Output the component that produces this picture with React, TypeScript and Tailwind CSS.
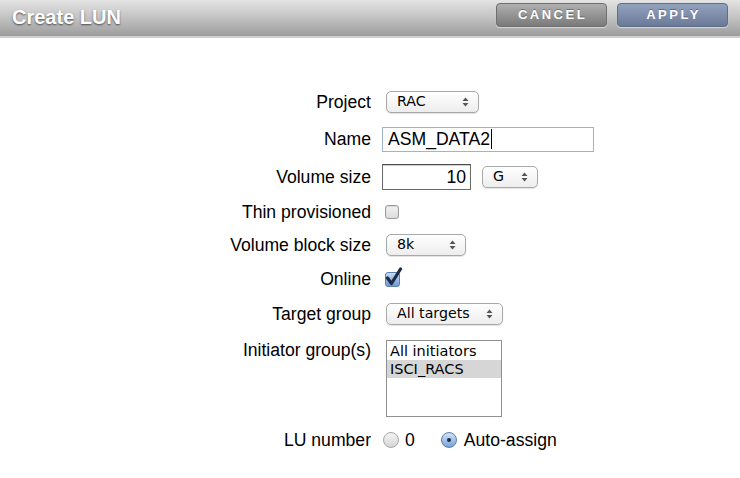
import React from "react";

const ARIAL = { fontFamily: '"Liberation Sans", Arial, sans-serif' };

function Arrows() {
  return (
    <svg width="7" height="10" viewBox="0 0 7 10" className="shrink-0">
      <path d="M3.5 0.5 L6.5 4 L0.5 4 Z" fill="#555" />
      <path d="M3.5 9.5 L6.5 6 L0.5 6 Z" fill="#555" />
    </svg>
  );
}

function Select({ label, w }: { label: string; w: string }) {
  return (
    <div
      className={`${w} h-[22px] flex items-center justify-between pl-[10px] pr-[9px] rounded-[5px] border border-[#a8a8a8] bg-gradient-to-b from-white to-[#ededed] shadow-[0_1px_1px_rgba(0,0,0,0.12)] text-[14.2px] text-black font-['DejaVu_Sans',sans-serif]`}
    >
      <span>{label}</span>
      <Arrows />
    </div>
  );
}

function Row({ label, h, children, top }: { label: string; h: string; children: React.ReactNode; top?: boolean }) {
  return (
    <div className={`flex ${h} ${top ? "items-start pt-[8px]" : "items-center"}`}>
      <div className="w-[371px] text-right text-[17.6px] leading-[20px] text-black pr-0" style={ARIAL}>
        {label}
      </div>
      <div className="ml-[14px] flex items-center">{children}</div>
    </div>
  );
}

export default function App() {
  return (
    <div className="w-[740px] h-[478px] bg-white overflow-hidden relative" style={ARIAL}>
      <div className="h-[38px] bg-gradient-to-b from-[#e4e4e4] via-[#c2c2c2] to-[#9c9c9c] border-b-2 border-[#cfcfcf] flex items-center justify-between pl-[12px] pr-[12px]">
        <div className="text-white font-bold text-[20px] [text-shadow:0_1px_2px_rgba(0,0,0,0.6)] -mt-[3px]">
          Create LUN
        </div>
        <div className="flex gap-[10px] -mt-[7px]">
          <div className="w-[111px] h-[24px] rounded-[4px] bg-gradient-to-b from-[#b0b0b0] to-[#7a7a7a] border border-[#6e6e6e] shadow-[0_1px_1px_rgba(255,255,255,0.5)] flex items-center justify-center text-white font-bold text-[13px] tracking-[2.5px] pl-[2px] [text-shadow:0_-1px_0_rgba(0,0,0,0.3)]">
            CANCEL
          </div>
          <div className="w-[111px] h-[24px] rounded-[4px] bg-gradient-to-b from-[#93a3bf] to-[#6a7a97] border border-[#5e6d88] shadow-[0_1px_1px_rgba(255,255,255,0.5)] flex items-center justify-center text-white font-bold text-[13px] tracking-[2.5px] pl-[2px] [text-shadow:0_-1px_0_rgba(0,0,0,0.3)]">
            APPLY
          </div>
        </div>
      </div>

      <div className="flex flex-col pt-[47px]">
        <Row label="Project" h="h-[34px]">
          <div className="ml-[1px]"><Select label="RAC" w="w-[93px]" /></div>
        </Row>
        <Row label="Name" h="h-[40px]">
          <div className="-ml-[3px] w-[212px] h-[25px] border border-[#9db3d2] bg-white flex items-center pl-[5px] text-[17.6px] text-black" style={ARIAL}>
            ASM_DATA2<span className="inline-block w-[1px] h-[20px] bg-black ml-[1px]" />
          </div>
        </Row>
        <Row label="Volume size" h="h-[36px]">
          <div className="-ml-[3px] w-[89px] h-[26px] border border-[#6b6b6b] border-t-[#4a4a4a] shadow-[inset_0_1px_1px_rgba(0,0,0,0.2)] bg-white flex items-center justify-end pr-[4px] text-[17.6px] text-black" style={ARIAL}>
            10
          </div>
          <div className="ml-[11px]"><Select label="G" w="w-[56px]" /></div>
        </Row>
        <Row label="Thin provisioned" h="h-[33px]">
          <div className="w-[14px] h-[14px] rounded-[3px] border border-[#9a9a9a] bg-gradient-to-b from-[#f2f2f2] to-[#dcdcdc] shadow-[inset_0_1px_1px_rgba(0,0,0,0.1)]" />
        </Row>
        <Row label="Volume block size" h="h-[34px]">
          <div className="ml-[1px]"><Select label="8k" w="w-[80px]" /></div>
        </Row>
        <Row label="Online" h="h-[34px]">
          <div className="relative w-[15px] h-[15px]">
            <div className="absolute inset-0 rounded-[3px] border border-[#5c7fae] bg-gradient-to-b from-[#c6dcf6] to-[#6f9ad3]" />
            <svg className="absolute -top-[5px] left-[0px]" width="18" height="20" viewBox="0 0 18 20">
              <path d="M2.5 11 L6.5 16.5 L15.5 2" fill="none" stroke="#1d2c44" strokeWidth="3.2" strokeLinecap="round" strokeLinejoin="round" />
            </svg>
          </div>
        </Row>
        <Row label="Target group" h="h-[36px]">
          <div className="ml-[1px]"><Select label="All targets" w="w-[117px]" /></div>
        </Row>
        <Row label="Initiator group(s)" h="h-[93px]" top>
          <div className="ml-[1px] w-[116px] h-[77px] border border-[#8f8f8f] bg-white flex flex-col pt-[1px] text-[14.5px] leading-[18px] text-black font-['DejaVu_Sans',sans-serif]">
            <div className="pl-[3px]">All initiators</div>
            <div className="pl-[3px] bg-[#d6d6d6]">ISCI_RACS</div>
          </div>
        </Row>
        <Row label="LU number" h="h-[30px]">
          <div className="-ml-[2px] flex items-center text-[17.6px] text-black" style={ARIAL}>
            <div className="w-[16px] h-[16px] rounded-full border border-[#a6a6a6] bg-gradient-to-b from-[#f4f4f4] to-[#d6d6d6]" />
            <span className="ml-[6px]">0</span>
            <div className="ml-[26px] w-[16px] h-[16px] rounded-full border border-[#5c7fae] bg-gradient-to-b from-[#cfe2f8] to-[#79a3d8] flex items-center justify-center">
              <div className="w-[4px] h-[4px] rounded-full bg-[#1d2c44]" />
            </div>
            <span className="ml-[7px]">Auto-assign</span>
          </div>
        </Row>
      </div>
    </div>
  );
}
